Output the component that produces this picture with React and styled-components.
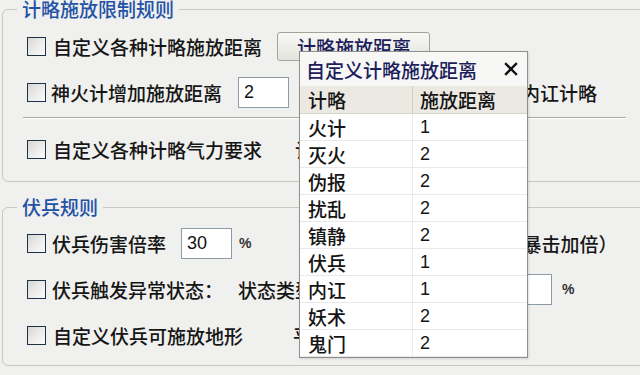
import React from 'react';
import styled, { createGlobalStyle } from 'styled-components';

const SKILLS = [
  { name: '火计', range: 1 },
  { name: '灭火', range: 2 },
  { name: '伪报', range: 2 },
  { name: '扰乱', range: 2 },
  { name: '镇静', range: 2 },
  { name: '伏兵', range: 1 },
  { name: '内讧', range: 1 },
  { name: '妖术', range: 2 },
  { name: '鬼门', range: 2 },
];

const GlobalStyle = createGlobalStyle`
  html, body {
    margin: 0;
    padding: 0;
  }
  body {
    background: #f0f0ee;
    font-family: "Noto Sans CJK SC", "Noto Sans", sans-serif;
    font-weight: 500;
    color: #161616;
    overflow: hidden;
  }
`;

const Page = styled.div`
  position: relative;
  width: 640px;
  height: 375px;
  overflow: hidden;
  padding-left: 2px;
  box-sizing: border-box;
`;

const Group = styled.fieldset`
  margin: ${p => p.$top}px 0 0 0;
  width: 700px;
  padding: 0;
  border: 1px solid #c8c8c1;
  border-radius: 6px;
  box-sizing: border-box;
`;

const Legend = styled.legend`
  margin-left: 14px;
  padding: 0 5px;
  font-size: 19px;
  line-height: 20px;
  color: #2352a6;
`;

const Body = styled.div`
  padding: ${p => p.$pad};
`;

const Row = styled.div`
  display: flex;
  align-items: center;
  height: 46px;
  white-space: nowrap;
`;

const Check = styled.span`
  flex: none;
  width: 19px;
  height: 19px;
  box-sizing: border-box;
  border: 1px solid #1f3049;
  background: linear-gradient(135deg, #d6d6d0 0%, #e9e9e6 45%, #fbfbfb 100%);
`;

const Label = styled.span`
  margin-left: ${p => p.$ml ?? 7}px;
  font-size: 19px;
  line-height: 1;
`;

const TextBox = styled.input`
  margin-left: ${p => p.$ml}px;
  width: 51px;
  height: 31px;
  box-sizing: border-box;
  padding: 0 0 0 5px;
  border: 1px solid #8d9aa9;
  background: #fff;
  font-family: "Liberation Sans", sans-serif;
  font-size: 18px;
  color: #111;
  outline: none;
`;

const Percent = styled.span`
  margin-left: ${p => p.$ml}px;
  font-family: "Liberation Sans", sans-serif;
  font-size: 14px;
  font-weight: bold;
  color: #333;
`;

const Button = styled.button`
  margin-left: 15px;
  width: 153px;
  height: 29px;
  padding: 0 0 0 19px;
  text-align: left;
  border: 1px solid #a4a49c;
  border-radius: 3px;
  background: linear-gradient(#f8f8f5, #e4e4de);
  font-family: inherit;
  font-weight: 500;
  font-size: 19px;
  line-height: 1;
  color: #1d1d5c;
`;

const Separator = styled.div`
  margin: 2px 0 8px -4px;
  width: 603px;
  height: 1px;
  background: #a8a8a2;
  box-shadow: 0 1px 0 #fff;
`;

const Popup = styled.div`
  position: absolute;
  left: 299px;
  top: 51px;
  width: 229px;
  box-sizing: border-box;
  border: 1px solid #8f8f8f;
  background: #fff;
  box-shadow: 1px 1px 2px rgba(0, 0, 0, 0.12);
`;

const PopupTitle = styled.div`
  display: flex;
  align-items: center;
  justify-content: space-between;
  height: 34px;
  padding: 0 9px 0 6px;
  background: #f7f7f6;
  font-size: 19px;
  color: #1d1d5c;
`;

const Close = styled.svg`
  width: 14px;
  height: 14px;
`;

const Table = styled.div`
  display: grid;
  grid-template-columns: 113px 1fr;
`;

const Cell = styled.div`
  display: flex;
  align-items: center;
  height: ${p => (p.$head ? 28 : 27)}px;
  box-sizing: border-box;
  padding-left: ${p => (p.$first ? 8 : 7)}px;
  border-bottom: 1px solid ${p => (p.$head ? '#d6d3c8' : '#e9e9e9')};
  border-right: ${p => (p.$first ? `1px solid ${p.$head ? '#cfccc0' : '#ececec'}` : 'none')};
  background: ${p => (p.$head ? '#ebe9e1' : '#fff')};
  font-size: 19px;
  color: #151515;
`;

const Num = styled.span`
  font-family: "Liberation Sans", sans-serif;
  font-weight: normal;
  font-size: 18px;
`;

export default function App() {
  return (
    <Page>
      <GlobalStyle />
      <Group $top={-1}>
        <Legend>计略施放限制规则</Legend>
        <Body $pad="4px 0 9px 24px">
          <Row>
            <Check />
            <Label>自定义各种计略施放距离</Label>
            <Button type="button">计略施放距离</Button>
          </Row>
          <Row>
            <Check />
            <Label $ml={5}>神火计增加施放距离</Label>
            <TextBox $ml={16} defaultValue="2" readOnly />
            <Label $ml={175}>适用于内讧计略</Label>
          </Row>
          <Separator />
          <Row>
            <Check />
            <Label>自定义各种计略气力要求</Label>
            <Label $ml={33}>计略气力要求</Label>
          </Row>
        </Body>
      </Group>

      <Group $top={15}>
        <Legend>伏兵规则</Legend>
        <Body $pad="3px 0 7px 24px">
          <Row>
            <Check />
            <Label $ml={6}>伏兵伤害倍率</Label>
            <TextBox $ml={15} defaultValue="30" readOnly />
            <Percent $ml={7}>%</Percent>
            <Label $ml={214}>（伏兵暴击加倍）</Label>
          </Row>
          <Row>
            <Check />
            <Label $ml={6}>伏兵触发异常状态：</Label>
            <Label $ml={15}>状态类型：</Label>
            <TextBox $ml={168} defaultValue="" readOnly />
            <Percent $ml={10}>%</Percent>
          </Row>
          <Row>
            <Check />
            <Label>自定义伏兵可施放地形</Label>
            <Label $ml={50}>平原、山地</Label>
          </Row>
        </Body>
      </Group>

      <Popup>
        <PopupTitle>
          <span>自定义计略施放距离</span>
          <Close viewBox="0 0 14 14">
            <path d="M2 2 L12 12 M12 2 L2 12" stroke="#111" strokeWidth="2.4" strokeLinecap="square" />
          </Close>
        </PopupTitle>
        <Table>
          <Cell $head $first>计略</Cell>
          <Cell $head>施放距离</Cell>
          {SKILLS.map(s => (
            <React.Fragment key={s.name}>
              <Cell $first>{s.name}</Cell>
              <Cell><Num>{s.range}</Num></Cell>
            </React.Fragment>
          ))}
        </Table>
      </Popup>
    </Page>
  );
}
